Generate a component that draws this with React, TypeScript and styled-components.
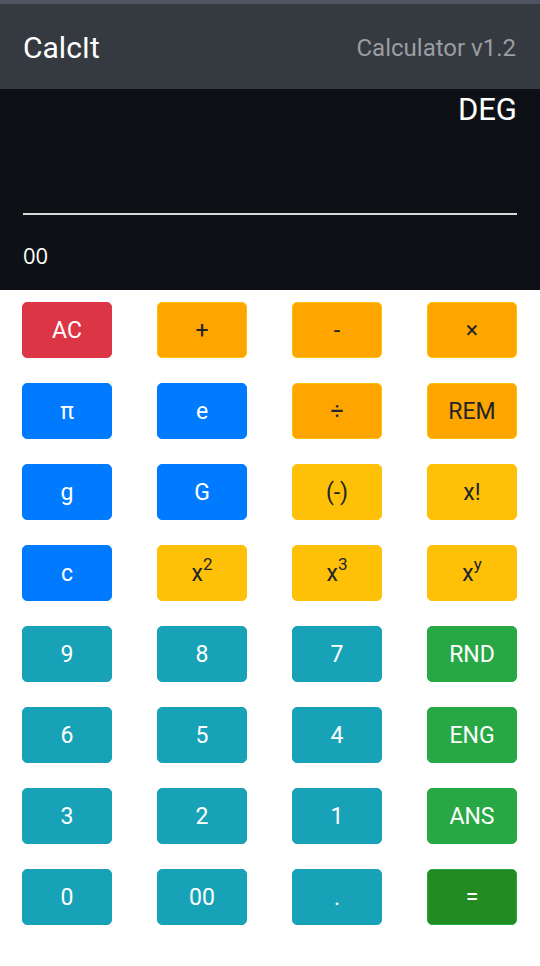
import React from "react";
import styled, { createGlobalStyle } from "styled-components";

const Global = createGlobalStyle`
  html, body { margin: 0; padding: 0; background: #ffffff; }
  body { font-family: Roboto, "Liberation Sans", sans-serif; }
`;

const Page = styled.div`
  width: 540px;
  min-height: 966px;
  background: #ffffff;
`;

const StatusStrip = styled.div`
  height: 4px;
  background: #4f5362;
`;

const Header = styled.header`
  height: 85px;
  background: #343a40;
  display: flex;
  align-items: center;
  justify-content: space-between;
  padding: 2px 24px 0 23px;
  box-sizing: border-box;
`;

const Brand = styled.div`
  color: #ffffff;
  font-size: 30px;
  font-family: Roboto, sans-serif;
`;

const Version = styled.div`
  color: #9a9da1;
  font-size: 24px;
  font-family: Roboto, sans-serif;
`;

const Display = styled.section`
  height: 201px;
  background: #0d1014;
  box-sizing: border-box;
  padding: 0 23px;
  display: flex;
  flex-direction: column;
`;

const Mode = styled.div`
  color: #ffffff;
  text-align: right;
  font-size: 31px;
  line-height: 40px;
  margin-top: 1px;
`;

const Rule = styled.div`
  height: 2px;
  background: #d8d8d8;
  margin-top: 83px;
`;

const Result = styled.div`
  color: #ffffff;
  font-family: "Open Sans", sans-serif;
  font-size: 22px;
  line-height: 30px;
  margin-top: 25px;
`;

const Pad = styled.div`
  display: grid;
  grid-template-columns: repeat(4, 90px);
  grid-auto-rows: 56px;
  column-gap: 45px;
  row-gap: 25px;
  padding: 12px 0 0 22px;
`;

type Variant = "danger" | "orange" | "primary" | "warning" | "info" | "success" | "equals";

const palette: Record<Variant, { bg: string; border: string; color: string }> = {
  danger: { bg: "#dc3545", border: "#dc3545", color: "#ffffff" },
  orange: { bg: "#ffa500", border: "#ffc107", color: "#212529" },
  primary: { bg: "#007bff", border: "#007bff", color: "#ffffff" },
  warning: { bg: "#ffc107", border: "#ffc107", color: "#212529" },
  info: { bg: "#17a2b8", border: "#17a2b8", color: "#ffffff" },
  success: { bg: "#28a745", border: "#28a745", color: "#ffffff" },
  equals: { bg: "#228b22", border: "#28a745", color: "#ffffff" },
};

const Key = styled.button<{ $v: Variant }>`
  box-sizing: border-box;
  margin: 0;
  padding: 0;
  border-radius: 5px;
  border: 1px solid ${(p) => palette[p.$v].border};
  background: ${(p) => palette[p.$v].bg};
  color: ${(p) => palette[p.$v].color};
  font-family: Roboto, sans-serif;
  font-size: 23px;
  display: flex;
  align-items: center;
  justify-content: center;
  line-height: 1;
  sup {
    font-size: 17px;
    position: relative;
    top: -9px;
    line-height: 0;
    vertical-align: baseline;
  }
`;

type K = { label: React.ReactNode; v: Variant };

const keys: K[] = [
  { label: "AC", v: "danger" },
  { label: "+", v: "orange" },
  { label: "-", v: "orange" },
  { label: "×", v: "orange" },
  { label: "π", v: "primary" },
  { label: "e", v: "primary" },
  { label: "÷", v: "orange" },
  { label: "REM", v: "orange" },
  { label: "g", v: "primary" },
  { label: "G", v: "primary" },
  { label: "(-)", v: "warning" },
  { label: "x!", v: "warning" },
  { label: "c", v: "primary" },
  { label: <>x<sup>2</sup></>, v: "warning" },
  { label: <>x<sup>3</sup></>, v: "warning" },
  { label: <>x<sup>y</sup></>, v: "warning" },
  { label: "9", v: "info" },
  { label: "8", v: "info" },
  { label: "7", v: "info" },
  { label: "RND", v: "success" },
  { label: "6", v: "info" },
  { label: "5", v: "info" },
  { label: "4", v: "info" },
  { label: "ENG", v: "success" },
  { label: "3", v: "info" },
  { label: "2", v: "info" },
  { label: "1", v: "info" },
  { label: "ANS", v: "success" },
  { label: "0", v: "info" },
  { label: "00", v: "info" },
  { label: ".", v: "info" },
  { label: "=", v: "equals" },
];

export default function App() {
  return (
    <Page>
      <Global />
      <StatusStrip />
      <Header>
        <Brand>CalcIt</Brand>
        <Version>Calculator v1.2</Version>
      </Header>
      <Display>
        <Mode>DEG</Mode>
        <Rule />
        <Result>00</Result>
      </Display>
      <Pad>
        {keys.map((k, i) => (
          <Key key={i} $v={k.v}>
            {k.label}
          </Key>
        ))}
      </Pad>
    </Page>
  );
}
